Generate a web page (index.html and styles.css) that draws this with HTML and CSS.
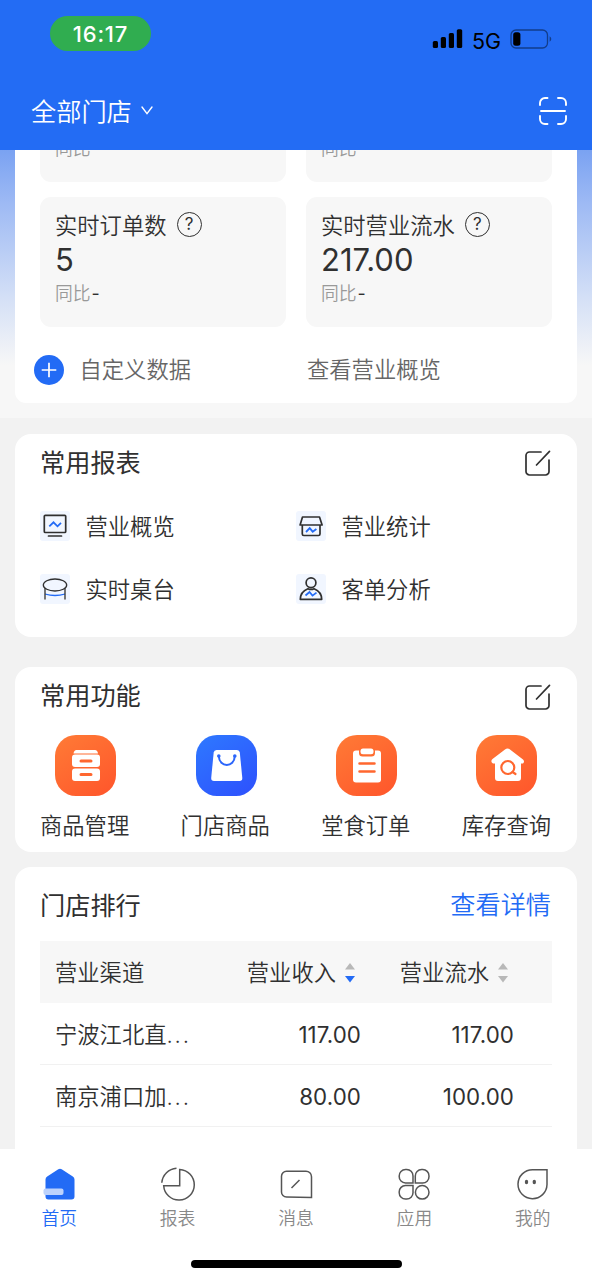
FILE: index.html
```html
<!DOCTYPE html>
<html lang="zh-CN">
<head>
<meta charset="utf-8">
<title>首页</title>
<link rel="stylesheet" href="styles.css">
</head>
<body>
<div class="app">
  <header class="header">
    <div class="status">
      <span class="clock">16:17</span>
      <div class="signals">
        <svg width="31" height="20" viewBox="0 0 31 20"><rect x="0.8" y="12" width="5.2" height="7" rx="1.5"/><rect x="8.8" y="8" width="5.2" height="11" rx="1.5"/><rect x="16.8" y="4" width="5.2" height="15" rx="1.5"/><rect x="24.8" y="0.3" width="5.4" height="18.7" rx="1.5"/></svg>
        <span class="network">5G</span>
        <svg width="42" height="20" viewBox="0 0 42 20"><rect x="1" y="1" width="36.5" height="18" rx="5" fill="none" stroke="#123d8b" stroke-width="1.3"/><rect x="3.2" y="3.2" width="7.2" height="13.6" rx="2.5"/><path d="M39.6 7.2q3.4 2.6 0 5.6z" fill="#123d8b"/></svg>
      </div>
    </div>
    <div class="store-bar">
      <div class="store">全部门店<svg width="12" height="9" viewBox="0 0 12 9"><path d="M1 1l5 6.700L11 1"/></svg></div>
      <svg class="scan" width="28" height="28" viewBox="0 0 28 28"><path d="M1 8V6a5 5 0 0 1 5-5h2.500M19 1h3a5 5 0 0 1 5 5v2M27 19v3a5 5 0 0 1-5 5h-3M8.500 27H6a5 5 0 0 1-5-5v-3M2 14h24"/></svg>
    </div>
  </header>

  <main class="content">
    <section class="overview">
      <div class="overview-card">
        <div class="stats">
          <div class="stat"><div class="stat-name">&nbsp;</div><div class="stat-value">&nbsp;</div><div class="compare">同比<b>-</b></div></div>
          <div class="stat"><div class="stat-name">&nbsp;</div><div class="stat-value">&nbsp;</div><div class="compare">同比<b>-</b></div></div>
          <div class="stat">
            <div class="stat-name">实时订单数<span class="help">?</span></div>
            <div class="stat-value">5</div>
            <div class="compare">同比<b>-</b></div>
          </div>
          <div class="stat">
            <div class="stat-name">实时营业流水<span class="help">?</span></div>
            <div class="stat-value">217.00</div>
            <div class="compare">同比<b>-</b></div>
          </div>
        </div>
        <div class="overview-links">
          <div class="custom"><svg width="30" height="30" viewBox="0 0 30 30"><circle cx="15" cy="15" r="15" fill="#236bf5"/><path d="M7.700 15h14.600M15 7.700v14.600" stroke="#fff" stroke-width="1.7"/></svg>自定义数据</div>
          <div>查看营业概览</div>
        </div>
      </div>
    </section>

    <section class="card reports">
      <div class="card-head"><h2>常用报表</h2><svg class="edit" width="26" height="26" viewBox="0 0 26 26"><path d="M16 2H4.500A3.500 3.500 0 0 0 1 5.500v16A3.500 3.500 0 0 0 4.500 25h16a3.500 3.500 0 0 0 3.500-3.500V10M11.500 15L24.500 1.300"/></svg></div>
      <div class="report-grid">
        <div class="report"><svg width="30" height="30" viewBox="0 0 30 30"><rect width="30" height="30" rx="3" fill="#f1f6ff"/><g class="ink"><rect x="4.300" y="4.300" width="21.400" height="17.200" rx="1"/><path d="M8.500 25h13"/></g><path class="wave" d="M9.300 15.300l4.200-4 4 4L21 11.800"/></svg><span>营业概览</span></div>
        <div class="report"><svg width="30" height="30" viewBox="0 0 30 30"><rect width="30" height="30" rx="3" fill="#f1f6ff"/><g class="ink"><path d="M6.500 6h17l2.600 8H4.100zM6.300 14v9a1.500 1.500 0 0 0 1.500 1.500h14.700a1.500 1.500 0 0 0 1.500-1.500V14"/></g><path class="wave" d="M10 21l3.700-3.800 3 3.500 3.700-2.700"/></svg><span>营业统计</span></div>
        <div class="report"><svg width="30" height="30" viewBox="0 0 30 30"><rect width="30" height="30" rx="3" fill="#f1f6ff"/><path class="wave thin" d="M5 20q10 3 20 0"/><g class="ink thin"><ellipse cx="15" cy="11" rx="11.700" ry="6"/><path d="M5 14.500V25M25 14.500V25"/></g></svg><span>实时桌台</span></div>
        <div class="report"><svg width="30" height="30" viewBox="0 0 30 30"><rect width="30" height="30" rx="3" fill="#f1f6ff"/><g class="ink"><circle cx="15" cy="8.800" r="4.900"/><path d="M4.300 25.300q0-7.500 7.600-10.600a7 7 0 0 0 6.200 0q7.600 3.100 7.600 10.600z"/></g><path class="wave" d="M9.500 21.500l4-3.500 3 3.600 4-3"/></svg><span>客单分析</span></div>
      </div>
    </section>

    <section class="card functions">
      <div class="card-head"><h2>常用功能</h2><svg class="edit" width="26" height="26" viewBox="0 0 26 26"><path d="M16 2H4.500A3.500 3.500 0 0 0 1 5.500v16A3.500 3.500 0 0 0 4.500 25h16a3.500 3.500 0 0 0 3.500-3.500V10M11.500 15L24.500 1.300"/></svg></div>
      <div class="function-list">
        <div class="function"><svg class="tile" width="61" height="61" viewBox="0 0 61 61"><path d="M21.500 15h18.500q2.500 0 3 3.500H18.500q.5-3.500 3-3.500z"/><rect x="17" y="19.500" width="28" height="12.500" rx="3"/><rect x="17" y="33.500" width="28" height="12.500" rx="3"/><path d="M26 26h10M26 39.500h10" stroke="#ff672f" stroke-width="3" stroke-linecap="round"/></svg>商品管理</div>
        <div class="function"><svg class="tile blue" width="61" height="61" viewBox="0 0 61 61"><path d="M20.500 15h20.500q2.500 0 2.800 2.500l2.500 25.500q.2 3-2.800 3H18q-3 0-2.800-3l2.500-25.500q.3-2.500 2.800-2.500z"/><path d="M22.800 21.300c.5 11.500 15.500 11.500 16 0" fill="none" stroke="#2c66fb" stroke-width="2"/><circle cx="22.800" cy="21" r="1.800" fill="#2c66fb"/><circle cx="38.800" cy="21" r="1.800" fill="#2c66fb"/></svg>门店商品</div>
        <div class="function"><svg class="tile" width="61" height="61" viewBox="0 0 61 61"><rect x="17" y="15.500" width="28" height="32" rx="3"/><rect x="23" y="12.500" width="16" height="9" rx="3.500" fill="#ff6d30"/><rect x="24.500" y="13.500" width="13" height="5.800" rx="2.500"/><path d="M23.500 28.500h15M23.500 36.500h15" stroke="#ff672f" stroke-width="2.500" stroke-linecap="round"/></svg>堂食订单</div>
        <div class="function"><svg class="tile" width="61" height="61" viewBox="0 0 61 61"><path d="M29 14.500q2.500-2 5 0l13 10q2 2 0 4h-2V43q0 3-3 3H22q-3 0-3-3V28.500h-2q-3-2-.5-4.500z"/><g fill="none" stroke="#ff672f" stroke-width="2.200" stroke-linecap="round"><circle cx="31.800" cy="32.500" r="6.500"/><path d="M36.500 37l3 2"/></g></svg>库存查询</div>
      </div>
    </section>

    <section class="card ranking">
      <div class="card-head"><h2>门店排行</h2><a class="details">查看详情</a></div>
      <div class="table">
        <div class="row table-head"><span class="channel">营业渠道</span><span class="sort">营业收入<svg width="10" height="20" viewBox="0 0 10 20"><path d="M0 6.500L5 0l5 6.500z" fill="#b8b8b8"/><path d="M0 13l5 6.500 5-6.500z" fill="#236bf5"/></svg></span><span class="sort">营业流水<svg width="10" height="20" viewBox="0 0 10 20"><path d="M0 6.500L5 0l5 6.500z" fill="#b8b8b8"/><path d="M0 13l5 6.500 5-6.500z" fill="#b8b8b8"/></svg></span></div>
        <div class="row"><span class="channel">宁波江北直<i>...</i></span><span class="num">117.00</span><span class="num">117.00</span></div>
        <div class="row"><span class="channel">南京浦口加<i>...</i></span><span class="num">80.00</span><span class="num">100.00</span></div>
      </div>
    </section>
  </main>

  <footer class="footer">
    <nav class="tabs">
      <div class="tab active"><svg width="36" height="36" viewBox="0 0 36 36"><path d="M17.300 3.300q1.700-1.200 3.400 0L31.800 10.500q1.700 1.200 1.700 3V30.500q0 3-3 3H7.500q-3 0-3-3V13.500q0-1.800 1.700-3z" fill="#236bf5"/><rect x="2.500" y="22.500" width="20" height="6.500" rx="2" fill="#bcd2fc"/></svg>首页</div>
      <div class="tab"><svg width="36" height="36" viewBox="0 0 36 36"><path d="M19.700 3.500A15.300 15.300 0 1 1 3.700 19.700H19.700zM1.800 16.700A16 16 0 0 1 16.500 2.200"/></svg>报表</div>
      <div class="tab"><svg width="36" height="36" viewBox="0 0 36 36"><path d="M8.500 5.200H28a5.500 5.500 0 0 1 5.500 5.500V31.500L8.500 31a5 5 0 0 1-5-5V10.200a5 5 0 0 1 5-5zM13.500 22l8-8"/></svg>消息</div>
      <div class="tab"><svg width="36" height="36" viewBox="0 0 36 36"><path d="M17 17H9.500A6.300 6.300 0 0 1 3.200 10.500V10A6.300 6.300 0 0 1 9.500 3.500h1A6.300 6.300 0 0 1 17 10zM19.300 17V10a6.300 6.300 0 0 1 6.300-6.500h1A6.300 6.300 0 0 1 33 10v.5A6.300 6.300 0 0 1 26.500 17zM17 19.500v7.300a6.300 6.300 0 0 1-6.300 6.300h-1a6.300 6.300 0 0 1-6.500-6.300v-1a6.300 6.300 0 0 1 6.300-6.300z"/><circle cx="26.200" cy="26.300" r="6.800"/></svg>应用</div>
      <div class="tab"><svg width="36" height="36" viewBox="0 0 36 36"><path d="M17.600 3.700H32V18.500A14.500 14.500 0 1 1 17.600 3.700z"/><g fill="#555" stroke="none"><ellipse cx="11.500" cy="16" rx="1.700" ry="2.200"/><ellipse cx="19.300" cy="16" rx="1.700" ry="2.200"/></g></svg>我的</div>
    </nav>
    <div class="home-indicator"></div>
  </footer>
</div>
</body>
</html>
```
FILE: styles.css
```css
* { box-sizing: border-box; }
body { margin: 0; }
.app {
  width: 592px; height: 1280px; overflow: hidden;
  display: flex; flex-direction: column;
  background: #f2f2f2; color: #303030;
  font-family: Inter, "Noto Sans CJK SC DemiLight", "Noto Sans CJK SC", sans-serif;
  font-size: 22.3px; font-weight: 350; line-height: 30px;
}
svg { display: block; flex: none; }
.header { height: 150px; flex: none; background: #236cf4; color: #fff; padding: 16px 25px 0 31px; }
.status { display: flex; justify-content: space-between; align-items: flex-start; padding: 0 15px 0 19px; }
.clock { width: 101px; height: 35px; border-radius: 18px; background: #30ad50; text-align: center; font-size: 22px; font-weight: 450; line-height: 36px; letter-spacing: .8px; }
.signals { display: flex; align-items: center; margin-top: 13px; color: #000; height: 20px; }
.network { font-size: 21.5px; font-weight: 400; line-height: 22px; margin: 3px 9px 0 9px; }
.store-bar { display: flex; justify-content: space-between; align-items: center; height: 34px; margin-top: 43px; }
.store { display: flex; align-items: center; gap: 10px; padding-top: 1px; font-size: 25.2px; }
.store svg { margin: -2px 0 0 -1px; }
.store svg, .scan { fill: none; stroke: #fff; stroke-width: 1.4; stroke-linecap: round; }
.scan { margin: -1px 0 0 0; stroke-width: 1.9; }

.content { flex: 1; min-height: 0; overflow: hidden; }
.overview { height: 268px; padding: 0 15px; overflow: hidden; background: linear-gradient(#7aa2f2, #9ebaf4 25%, #d3dff6 68%, #f7f7f7 100%) 0 0 / 100% 215px no-repeat #f7f7f7; }
.overview-card { height: 351px; margin-top: -98px; padding: 0 25px; background: #fff; border-radius: 11px; }
.stats { display: grid; grid-template-columns: 246px 246px; column-gap: 20px; row-gap: 15px; }
.stat { height: 130px; padding: 14px 15px; background: #f7f7f7; border-radius: 11px; }
.stat-name { display: flex; align-items: center; height: 28px; padding-top: 1px; }
.help { width: 25px; height: 25px; margin: -2px 0 0 10px; border: 1.700px solid #303030; border-radius: 50%; text-align: center; font-size: 17px; font-weight: 400; line-height: 23px; }
.stat-value { font-size: 31px; font-weight: 380; line-height: 41px; }
.compare { color: #999; font-size: 17.800px; line-height: 25px; padding-top: 0.5px; }
.compare b { margin-left: 1px; color: #303030; font-weight: 400; }
.overview-links { display: grid; grid-template-columns: 267px 1fr; align-items: center; height: 30px; margin: 27.500px 0 0; color: #666; }
.custom { display: flex; align-items: center; gap: 16px; margin-left: -6.500px; }

.card { margin: 0 15px; padding: 0 25px; background: #fff; border-radius: 16px; }
.card-head { display: flex; justify-content: space-between; align-items: center; height: 60px; }
h2 { margin: -6px 0 0; font-family: "Noto Sans CJK SC", sans-serif; font-size: 25.200px; font-weight: 400; line-height: 34px; }
.edit { margin: -1px 1px 0 0; fill: none; stroke: #303030; stroke-width: 1.700; stroke-linecap: round; stroke-linejoin: round; }
.functions .edit { margin-top: 0; }
.reports { height: 203px; margin-top: 15.500px; }
.report-grid { display: grid; grid-template-columns: 256px 1fr; row-gap: 33px; padding-top: 17px; }
.report { display: flex; align-items: center; gap: 15.500px; height: 30.500px; }
.report span { padding-top: 2px; }
.ink { fill: none; stroke: #303030; stroke-width: 1.700; stroke-linecap: round; stroke-linejoin: round; }
.wave { fill: none; stroke: #236bf5; stroke-width: 1.800; }
.thin { stroke-width: 1.300; }
.functions { height: 185px; margin-top: 30px; }
.function-list { display: flex; justify-content: space-between; padding-top: 8px; margin-right: 1px; }
.function { display: flex; flex-direction: column; align-items: center; gap: 15px; }
.tile { margin-left: 1.200px; fill: #fff; border-radius: 21px; background: linear-gradient(145deg, #ff7b36, #ff552b); }
.tile.blue { margin-left: 2px; background: linear-gradient(145deg, #2e79ff, #2e50fd); }
.ranking { height: 310px; margin-top: 15px; }
.ranking .card-head { height: 74px; padding-top: 2px; }
.ranking h2 { margin-top: -2px; }
.details { color: #236bf5; font-size: 25.200px; margin-right: 1px; }
.row { display: grid; grid-template-columns: 152px 154px 153px; align-items: center; height: 62px; padding: 3px 0 0 15px; border-bottom: 1.500px solid #f1f1f1; }
.table-head { background: #f7f7f7; border: 0; }
.channel i { font-style: normal; letter-spacing: 1.800px; }
.sort { display: flex; align-items: center; justify-content: flex-end; gap: 9px; padding-right: 6px; }
.sort svg { margin-top: -1px; }
.num { text-align: right; font-weight: 400; letter-spacing: .1px; }

.footer { height: 131px; flex: none; background: #fff; }
.tabs { display: grid; grid-template-columns: repeat(5, 1fr); padding-top: 17px; }
.tab { display: flex; flex-direction: column; align-items: center; gap: 5px; color: #888; font-size: 17.800px; line-height: 24px; }
.tab svg { fill: none; stroke: #555; stroke-width: 1.500; }
.tab.active { color: #236bf5; }
.tab.active svg { stroke: none; }
.home-indicator { width: 211px; height: 8px; margin: 29px auto 0; border-radius: 4px; background: #000; }
```
